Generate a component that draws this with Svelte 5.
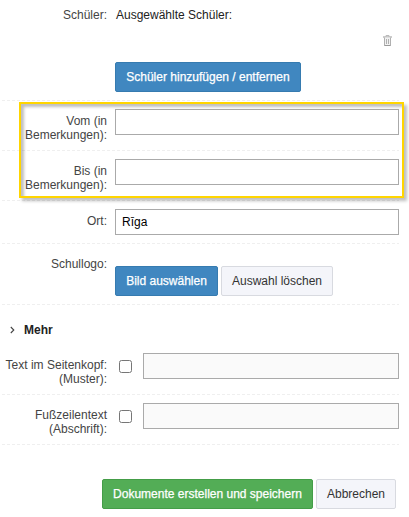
<script>
  let from = $state("");
  let to = $state("");
  let place = $state("Rīga");

  let options = $state([
    {id: "header", label: "Text im Seitenkopf: (Muster):", enabled: false, text: ""},
    {id: "footer", label: "Fußzeilentext (Abschrift):", enabled: false, text: ""},
  ]);
</script>

<form class="form" onsubmit={(e) => e.preventDefault()}>
  <div class="row students">
    <span class="label">Schüler:</span>
    <div class="field">
      <div class="selected">Ausgewählte Schüler:</div>
      <button type="button" class="trash" aria-label="Löschen">
        <svg width="9" height="11" viewBox="0 0 9 11">
          <path d="M3 1.5V.5h3v1" fill="none" stroke="#bbb" />
          <path d="M0 2h9" stroke="#999" />
          <path d="M1.5 2.5v8h6v-8" fill="#f1f1f1" stroke="#b0b0b0" />
          <path d="M3.5 4v5M5.5 4v5" stroke="#b0b0b0" />
          <path d="M1.5 10.5h6" stroke="#999" />
        </svg>
      </button>
      <button type="button" class="btn primary add">Schüler hinzufügen / entfernen</button>
    </div>
  </div>

  <div class="period">
    <div class="row">
      <label class="label" for="from">Vom (in Bemerkungen):</label>
      <input id="from" type="text" bind:value={from} />
    </div>
    <div class="row">
      <label class="label" for="to">Bis (in Bemerkungen):</label>
      <input id="to" type="text" bind:value={to} />
    </div>
    <div class="highlight"></div>
  </div>

  <div class="row place">
    <label class="label" for="place">Ort:</label>
    <input id="place" type="text" bind:value={place} />
  </div>

  <div class="row logo">
    <span class="label">Schullogo:</span>
    <div class="buttons">
      <button type="button" class="btn primary pick">Bild auswählen</button>
      <button type="button" class="btn clear">Auswahl löschen</button>
    </div>
  </div>

  <div class="more">
    <svg width="5" height="8" viewBox="0 0 5 8">
      <path d="M.8 1l3 3-3 3" fill="none" stroke="#444" stroke-width="1.1" />
    </svg>
    <span>Mehr</span>
  </div>

  {#each options as option}
    <div class="row">
      <label class="label" for={option.id}>{option.label}</label>
      <input type="checkbox" aria-label={option.label} bind:checked={option.enabled} />
      <input id={option.id} type="text" disabled={!option.enabled} bind:value={option.text} />
    </div>
  {/each}

  <div class="actions">
    <button type="submit" class="btn success">Dokumente erstellen und speichern</button>
    <button type="button" class="btn cancel">Abbrechen</button>
  </div>
</form>

<style>
  :global(body) {
    background: #fff;
    overflow: hidden;
  }

  .form {
    width: 397px;
    padding-left: 2px;
    font: 12px/14px "Liberation Sans", Arial, sans-serif;
    color: #333;
  }

  .row {
    display: flex;
    align-items: flex-start;
    box-sizing: border-box;
    height: 50px;
    padding-top: 8px;
    background: repeating-linear-gradient(90deg, #efefef 0 3px, transparent 3px 5px)
      left bottom / 100% 1px no-repeat;
  }

  .label {
    flex: none;
    box-sizing: border-box;
    width: 105px;
    margin-right: 8px;
    padding: 5px 0 0 2px;
    text-align: right;
    color: #444;
  }

  .field {
    display: flex;
    flex-direction: column;
    flex: 1;
  }

  .students {
    height: 101px;
    padding-top: 3px;
  }

  .selected {
    padding: 5px 0 0 1px;
    color: #222;
  }

  .trash {
    align-self: flex-end;
    display: block;
    width: 9px;
    height: 11px;
    margin: 13px 7px 0 0;
    padding: 0;
    border: 0;
    background: none;
  }

  .trash svg {
    display: block;
  }

  .period {
    position: relative;
  }

  .highlight {
    position: absolute;
    top: 1px;
    left: 17px;
    box-sizing: border-box;
    width: 385px;
    height: 96px;
    border: 2px solid #ffd500;
    box-shadow:
      3px 3px 3px rgba(0, 0, 0, 0.25),
      inset 3px 3px 3px rgba(0, 0, 0, 0.25);
    pointer-events: none;
  }

  .place {
    height: 43px;
  }

  .logo {
    height: 61px;
  }

  input[type="text"] {
    flex: 1;
    box-sizing: border-box;
    min-width: 0;
    height: 26px;
    margin: 0;
    padding: 0 6px;
    border: 1px solid #aaa;
    border-radius: 0;
    background: #fff;
    font: 12px "Liberation Sans", Arial, sans-serif;
    color: #000;
  }

  input[type="text"]:disabled {
    background: #fafafa;
  }

  input[type="checkbox"] {
    flex: none;
    width: 13px;
    height: 13px;
    margin: 7px 11px 0 4px;
  }

  .buttons {
    display: flex;
    gap: 3px;
    padding-top: 14px;
  }

  .btn {
    box-sizing: border-box;
    height: 30px;
    padding: 0;
    border: 1px solid #d8dae0;
    border-radius: 2px;
    background: #f4f5fa;
    font: 12px "Liberation Sans", Arial, sans-serif;
    color: #333;
    white-space: nowrap;
  }

  .primary {
    border-color: #367bb0;
    background: #4087c0;
    color: #fff;
    -webkit-text-stroke: 0.25px #fff;
  }

  .success {
    width: 211px;
    border-color: #449d48;
    background: #53ad56;
    color: #fff;
    -webkit-text-stroke: 0.25px #fff;
  }

  .add {
    width: 186px;
    margin-top: 16px;
  }

  .pick {
    width: 103px;
  }

  .clear {
    width: 112px;
  }

  .cancel {
    width: 80px;
  }

  .more {
    display: flex;
    align-items: center;
    gap: 9px;
    height: 40px;
    padding: 10px 0 0 8px;
    box-sizing: border-box;
    font-weight: bold;
    color: #222;
  }

  .actions {
    display: flex;
    justify-content: flex-end;
    gap: 3px;
    padding: 34px 3px 0 0;
  }
</style>
